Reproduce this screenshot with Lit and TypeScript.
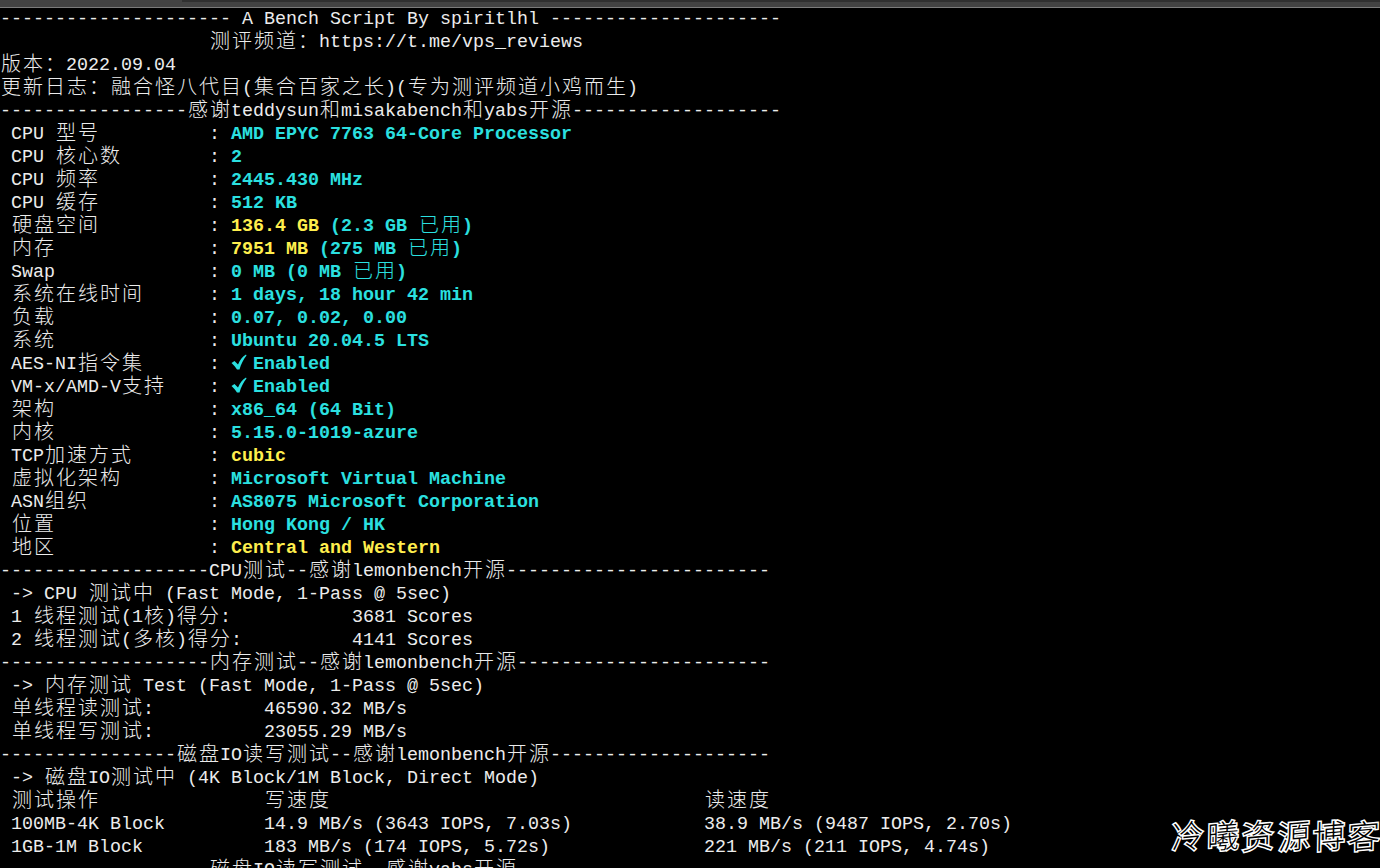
import { LitElement, html, css } from "lit";
import { customElement } from "lit/decorators.js";

type Seg = string | { t: string; c: "cy" | "ye" };
const cy = (t: string): Seg => ({ t, c: "cy" });
const ye = (t: string): Seg => ({ t, c: "ye" });
const dash = (n: number) => "-".repeat(n);
const wide = (ch: string) => /[\u2e80-\u9fff\uff00-\uffef\u3000-\u303f]/.test(ch);
const cols = (s: string) => [...s].reduce((a, ch) => a + (wide(ch) ? 2 : 1), 0);
const pad = (s: string, n: number) => s + " ".repeat(Math.max(0, n - cols(s)));

const info = (k: string, ...v: Seg[]): Seg[] => [pad(" " + k, 19) + ": ", ...v];

const LINES: Seg[][] = [
  [`${dash(21)} A Bench Script By spiritlhl ${dash(21)}`],
  [" ".repeat(19) + "测评频道：https://t.me/vps_reviews"],
  ["版本：2022.09.04"],
  ["更新日志：融合怪八代目(集合百家之长)(专为测评频道小鸡而生)"],
  [`${dash(17)}感谢teddysun和misakabench和yabs开源${dash(19)}`],
  info("CPU 型号", cy("AMD EPYC 7763 64-Core Processor")),
  info("CPU 核心数", cy("2")),
  info("CPU 频率", cy("2445.430 MHz")),
  info("CPU 缓存", cy("512 KB")),
  info("硬盘空间", ye("136.4 GB"), cy(" (2.3 GB 已用)")),
  info("内存", ye("7951 MB"), cy(" (275 MB 已用)")),
  info("Swap", cy("0 MB (0 MB 已用)")),
  info("系统在线时间", cy("1 days, 18 hour 42 min")),
  info("负载", cy("0.07, 0.02, 0.00")),
  info("系统", cy("Ubuntu 20.04.5 LTS")),
  info("AES-NI指令集", cy("✔Enabled")),
  info("VM-x/AMD-V支持", cy("✔Enabled")),
  info("架构", cy("x86_64 (64 Bit)")),
  info("内核", cy("5.15.0-1019-azure")),
  info("TCP加速方式", ye("cubic")),
  info("虚拟化架构", cy("Microsoft Virtual Machine")),
  info("ASN组织", cy("AS8075 Microsoft Corporation")),
  info("位置", cy("Hong Kong / HK")),
  info("地区", ye("Central and Western")),
  [`${dash(19)}CPU测试--感谢lemonbench开源${dash(24)}`],
  [" -> CPU 测试中 (Fast Mode, 1-Pass @ 5sec)"],
  [pad(" 1 线程测试(1核)得分:", 32) + "3681 Scores"],
  [pad(" 2 线程测试(多核)得分:", 32) + "4141 Scores"],
  [`${dash(19)}内存测试--感谢lemonbench开源${dash(23)}`],
  [" -> 内存测试 Test (Fast Mode, 1-Pass @ 5sec)"],
  [pad(" 单线程读测试:", 24) + "46590.32 MB/s"],
  [pad(" 单线程写测试:", 24) + "23055.29 MB/s"],
  [`${dash(16)}磁盘IO读写测试--感谢lemonbench开源${dash(20)}`],
  [" -> 磁盘IO测试中 (4K Block/1M Block, Direct Mode)"],
  [pad(pad(" 测试操作", 24) + "写速度", 64) + "读速度"],
  [pad(pad(" 100MB-4K Block", 24) + "14.9 MB/s (3643 IOPS, 7.03s)", 64) + "38.9 MB/s (9487 IOPS, 2.70s)"],
  [pad(pad(" 1GB-1M Block", 24) + "183 MB/s (174 IOPS, 5.72s)", 64) + "221 MB/s (211 IOPS, 4.74s)"],
  [`${dash(19)}磁盘IO读写测试--感谢yabs开源${dash(23)}`],
];

@customElement("app-root")
export class AppRoot extends LitElement {
  static styles = css`
    :host {
      display: block;
      position: relative;
      width: 1380px;
      height: 868px;
      overflow: hidden;
      background: #000;
      color: #ececec;
      font-family: "Liberation Mono", "Noto Sans CJK SC", monospace;
      font-size: 18.333px;
    }
    .bar {
      height: 7px;
      background: #434343;
      border-bottom: 1px solid #7c7c7c;
    }
    .tab {
      height: 2px;
      margin-left: 182px;
      background: #303030;
    }
    .line {
      height: 23px;
      line-height: 23px;
      white-space: pre;
    }
    .cy { color: #2be0e0; font-weight: 700; }
    .ye { color: #ffee4d; font-weight: 700; }
    .w {
      display: inline-block;
      width: 22px;
      height: 23px;
      text-align: center;
      font-family: "Noto Sans CJK SC", sans-serif;
      font-size: 20px;
      font-weight: 300;
      line-height: 18px;
      vertical-align: top;
    }
    .check {
      display: inline-block;
      width: 22px;
      height: 23px;
      vertical-align: top;
      fill: #2be0e0;
    }
    .mark {
      position: absolute;
      right: 0;
      top: 814px;
      display: flex;
      width: 208px;
      justify-content: space-between;
      font-family: "Noto Sans CJK SC", sans-serif;
      font-size: 32px;
      line-height: 40px;
      color: #000;
      -webkit-text-stroke: 3px #fff;
      paint-order: stroke fill;
      font-weight: 300;
    }
    .mark span { transform: rotate(-5deg) skewX(-6deg); }
  `;

  private run(t: string) {
    const out: unknown[] = [];
    let buf = "";
    for (const ch of t) {
      if (ch === "✔") {
        if (buf) { out.push(buf); buf = ""; }
        out.push(html`<svg class="check" viewBox="0 0 22 23"><path d="M0.5 10L3.5 8L7 11.5C9 7 11.5 3.5 15 1.5L15.5 2.5C12.5 6.5 10 11 8.5 16.5L6 16.5C4.5 14 2.5 12 0.5 10Z"></path></svg>`);
      } else if (wide(ch)) {
        if (buf) { out.push(buf); buf = ""; }
        out.push(html`<span class="w">${ch}</span>`);
      } else buf += ch;
    }
    if (buf) out.push(buf);
    return out;
  }

  render() {
    return html`
      <div class="bar"><div class="tab"></div></div>
      ${LINES.map(
        (l) => html`<div class="line">${l.map((s) =>
          typeof s === "string"
            ? this.run(s)
            : html`<span class=${s.c}>${this.run(s.t)}</span>`
        )}</div>`
      )}
      <div class="mark">${[..."冷曦资源博客"].map((c) => html`<span>${c}</span>`)}</div>
    `;
  }
}
